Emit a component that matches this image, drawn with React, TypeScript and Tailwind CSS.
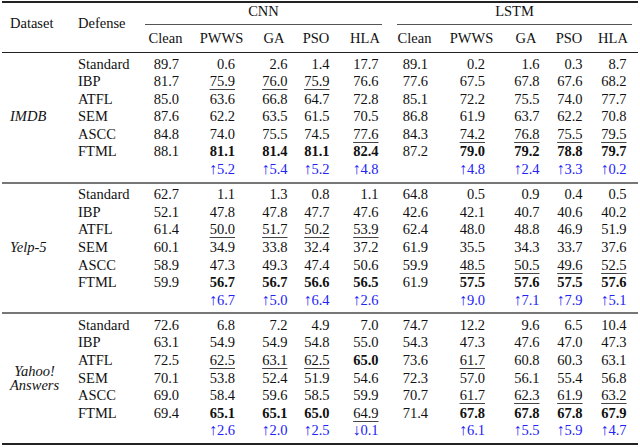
import React from 'react';

type Cell = string;

// "_x" = underlined, "*x" = bold
const blocks: { name: React.ReactNode; rows: [string, Cell[]][]; gains: string[] }[] = [
  {
    name: 'IMDB',
    rows: [
      ['Standard', ['89.7', '0.6', '2.6', '1.4', '17.7', '89.1', '0.2', '1.6', '0.3', '8.7']],
      ['IBP', ['81.7', '_75.9', '_76.0', '_75.9', '76.6', '77.6', '67.5', '67.8', '67.6', '68.2']],
      ['ATFL', ['85.0', '63.6', '66.8', '64.7', '72.8', '85.1', '72.2', '75.5', '74.0', '77.7']],
      ['SEM', ['87.6', '62.2', '63.5', '61.5', '70.5', '86.8', '61.9', '63.7', '62.2', '70.8']],
      ['ASCC', ['84.8', '74.0', '75.5', '74.5', '_77.6', '84.3', '_74.2', '_76.8', '_75.5', '_79.5']],
      ['FTML', ['88.1', '*81.1', '*81.4', '*81.1', '*82.4', '87.2', '*79.0', '*79.2', '*78.8', '*79.7']],
    ],
    gains: ['↑5.2', '↑5.4', '↑5.2', '↑4.8', '↑4.8', '↑2.4', '↑3.3', '↑0.2'],
  },
  {
    name: 'Yelp-5',
    rows: [
      ['Standard', ['62.7', '1.1', '1.3', '0.8', '1.1', '64.8', '0.5', '0.9', '0.4', '0.5']],
      ['IBP', ['52.1', '47.8', '47.8', '47.7', '47.6', '42.6', '42.1', '40.7', '40.6', '40.2']],
      ['ATFL', ['61.4', '_50.0', '_51.7', '_50.2', '_53.9', '62.4', '48.0', '48.8', '46.9', '51.9']],
      ['SEM', ['60.1', '34.9', '33.8', '32.4', '37.2', '61.9', '35.5', '34.3', '33.7', '37.6']],
      ['ASCC', ['58.9', '47.3', '49.3', '47.4', '50.6', '59.9', '_48.5', '_50.5', '_49.6', '_52.5']],
      ['FTML', ['59.9', '*56.7', '*56.7', '*56.6', '*56.5', '61.9', '*57.5', '*57.6', '*57.5', '*57.6']],
    ],
    gains: ['↑6.7', '↑5.0', '↑6.4', '↑2.6', '↑9.0', '↑7.1', '↑7.9', '↑5.1'],
  },
  {
    name: (
      <span className="inline-block text-center leading-[14.5px]">
        Yahoo!
        <br />
        Answers
      </span>
    ),
    rows: [
      ['Standard', ['72.6', '6.8', '7.2', '4.9', '7.0', '74.7', '12.2', '9.6', '6.5', '10.4']],
      ['IBP', ['63.1', '54.9', '54.9', '54.8', '55.0', '54.3', '47.3', '47.6', '47.0', '47.3']],
      ['ATFL', ['72.5', '_62.5', '_63.1', '_62.5', '*65.0', '73.6', '_61.7', '60.8', '60.3', '63.1']],
      ['SEM', ['70.1', '53.8', '52.4', '51.9', '54.6', '72.3', '57.0', '56.1', '55.4', '56.8']],
      ['ASCC', ['69.0', '58.4', '59.6', '58.5', '59.9', '70.7', '_61.7', '_62.3', '_61.9', '_63.2']],
      ['FTML', ['69.4', '*65.1', '*65.1', '*65.0', '_64.9', '71.4', '*67.8', '*67.8', '*67.8', '*67.9']],
    ],
    gains: ['↑2.6', '↑2.0', '↑2.5', '↓0.1', '↑6.1', '↑5.5', '↑5.9', '↑4.7'],
  },
];

const cols =
  'grid grid-cols-[73px_41px_71px_34px_50px_48px_8px_35px_79px_30px_56px_32px_9px]';
const attacks = ['Clean', 'PWWS', 'GA', 'PSO', 'HLA'];

function Num({ v }: { v: string }) {
  let body: React.ReactNode = v;
  if (v.startsWith('_')) {
    body = (
      <span className="underline decoration-[1px] underline-offset-[3px] decoration-[#444]">
        {v.slice(1)}
      </span>
    );
  } else if (v.startsWith('*')) {
    body = <span className="font-bold">{v.slice(1)}</span>;
  } else if (v.startsWith('↑') || v.startsWith('↓')) {
    body = (
      <>
        <span className="text-[16px] leading-none">{v[0]}</span>
        {v.slice(1)}
      </>
    );
  }
  return (
    <div className="text-center">
      <span className="inline-flex w-[27px] justify-end items-baseline whitespace-nowrap">{body}</span>
    </div>
  );
}

function Row({ label, values }: { label: string; values: string[] }) {
  return (
    <div className={`${cols} h-[17.6px] items-center`}>
      <div className="pl-[6px]">{label}</div>
      {values.slice(0, 5).map((v, i) => (
        <Num key={i} v={v} />
      ))}
      <div />
      {values.slice(5).map((v, i) => (
        <Num key={i + 5} v={v} />
      ))}
      <div />
    </div>
  );
}

function GainRow({ gains }: { gains: string[] }) {
  return (
    <div className={`${cols} h-[17.6px] items-center text-[#2323f5]`}>
      <div />
      <div />
      {gains.slice(0, 4).map((v, i) => (
        <Num key={i} v={v} />
      ))}
      <div />
      <div />
      {gains.slice(4).map((v, i) => (
        <Num key={i + 4} v={v} />
      ))}
      <div />
    </div>
  );
}

export default function App() {
  return (
    <div className="w-[640px] h-[447px] bg-white overflow-hidden pt-[1px] px-[2px] font-['Liberation_Serif',serif] text-[14.5px] leading-[17.6px] text-[#111]">
      <div className="h-[2px] bg-[#222]" />

      {/* header */}
      <div className="flex h-[49px]">
        <div className="w-[70px] pl-[8px] pt-[12px]">Dataset</div>
        <div className="flex-1 flex flex-col">
          <div className={`${cols} h-[24px]`}>
            <div className="row-span-2 pl-[6px] pt-[12px] h-[48px]">Defense</div>
            <div className="col-span-5 pr-[7px] flex flex-col justify-end">
              <div className="text-center pb-[3px]">CNN</div>
              <div className="h-px bg-[#555]" />
            </div>
            <div />
            <div className="col-span-6 mr-[6px] flex flex-col justify-end">
              <div className="text-center pb-[3px]">LSTM</div>
              <div className="h-px bg-[#555]" />
            </div>
          </div>
          <div className={`${cols} h-[24px] items-center`}>
            {attacks.map((a, i) => (
              <div key={'c' + a} className={i === 0 ? 'col-start-2 text-center' : 'text-center'}>
                {a}
              </div>
            ))}
            <div />
            {attacks.map((a) => (
              <div key={'l' + a} className="text-center">
                {a}
              </div>
            ))}
          </div>
        </div>
      </div>
      <div className="h-px bg-[#222]" />

      {blocks.map((b, bi) => (
        <div key={bi}>
          <div className="flex pt-[2.5px] pb-[3px]">
            <div className="w-[70px] pl-[8px] flex items-center italic">{b.name}</div>
            <div className="flex-1">
              {b.rows.map(([label, values]) => (
                <Row key={label} label={label} values={values} />
              ))}
              <GainRow gains={b.gains} />
            </div>
          </div>
          <div className={bi === 2 ? 'h-[2px] bg-[#222]' : 'h-[2px] bg-[#777]'} />
        </div>
      ))}
    </div>
  );
}
